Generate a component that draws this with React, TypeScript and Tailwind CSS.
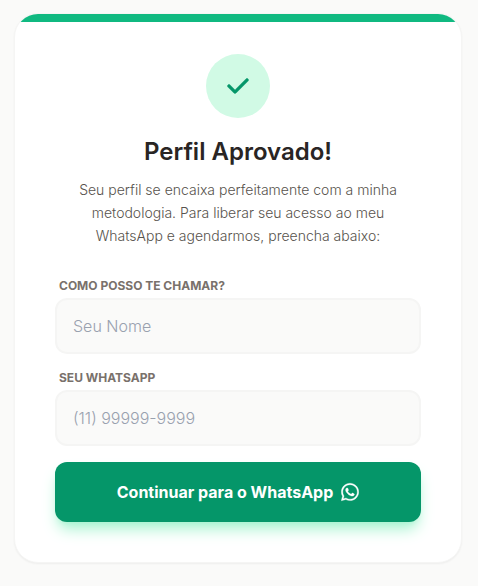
import React, { useState } from 'react';
import { FaCheck, FaWhatsapp } from 'react-icons/fa6';

interface FieldProps {
    id: string;
    label: string;
    type: string;
    placeholder: string;
    value: string;
    onChange: (value: string) => void;
}

const Field: React.FC<FieldProps> = ({ id, label, type, placeholder, value, onChange }) => {
    return (
        <div>
            <label htmlFor={id} className="block ml-1 mb-1 text-xs font-bold uppercase text-stone-500">{label}</label>
            <input
                id={id}
                type={type}
                placeholder={placeholder}
                value={value}
                onChange={(e) => onChange(e.target.value)}
                className="block w-full p-4 text-base leading-5 font-light rounded-xl border-2 border-stone-100 bg-stone-50 text-stone-800 placeholder:text-gray-400 outline-none focus:border-emerald-500 transition-colors"
            />
        </div>
    );
};

const App: React.FC = () => {
    const [name, setName] = useState('');
    const [phone, setPhone] = useState('');

    return (
        <main className="min-h-screen bg-[#fafaf9] pl-[14px] pr-4 py-[13px] font-['Inter',sans-serif]">
            <div className="relative w-full max-w-md mx-auto p-10 overflow-hidden rounded-3xl border border-stone-100 bg-white shadow-xs">
                <div className="absolute top-0 left-0 w-full h-2 bg-[#10b981]" />
                <div className="text-center">
                    <div className="flex items-center justify-center w-16 h-16 mx-auto mb-4 rounded-full bg-[#d1fae5] text-[#059669]">
                        <FaCheck className="w-6 h-6" stroke="currentColor" strokeWidth={10} />
                    </div>
                    <h2 className="mb-2 text-2xl leading-9 font-semibold text-stone-800">Perfil Aprovado!</h2>
                    <p className="px-4 mb-[31px] text-sm leading-[23px] font-light text-stone-600">
                        Seu perfil se encaixa perfeitamente com a minha metodologia. Para liberar seu acesso ao meu WhatsApp e agendarmos, preencha abaixo:
                    </p>
                </div>
                <form className="space-y-4" onSubmit={(e) => e.preventDefault()}>
                    <Field id="name" label="Como posso te chamar?" type="text" placeholder="Seu Nome" value={name} onChange={setName} />
                    <Field id="phone" label="Seu WhatsApp" type="tel" placeholder="(11) 99999-9999" value={phone} onChange={setPhone} />
                    <button type="submit" className="flex items-center justify-center gap-2 w-full py-[18px] rounded-xl bg-[#059669] hover:bg-emerald-700 text-base font-bold text-white shadow-lg shadow-[#a7f3d0] transition-colors">
                        Continuar para o WhatsApp
                        <FaWhatsapp className="w-[18px] h-5" stroke="currentColor" strokeWidth={8} />
                    </button>
                </form>
            </div>
        </main>
    );
};

export default App;
